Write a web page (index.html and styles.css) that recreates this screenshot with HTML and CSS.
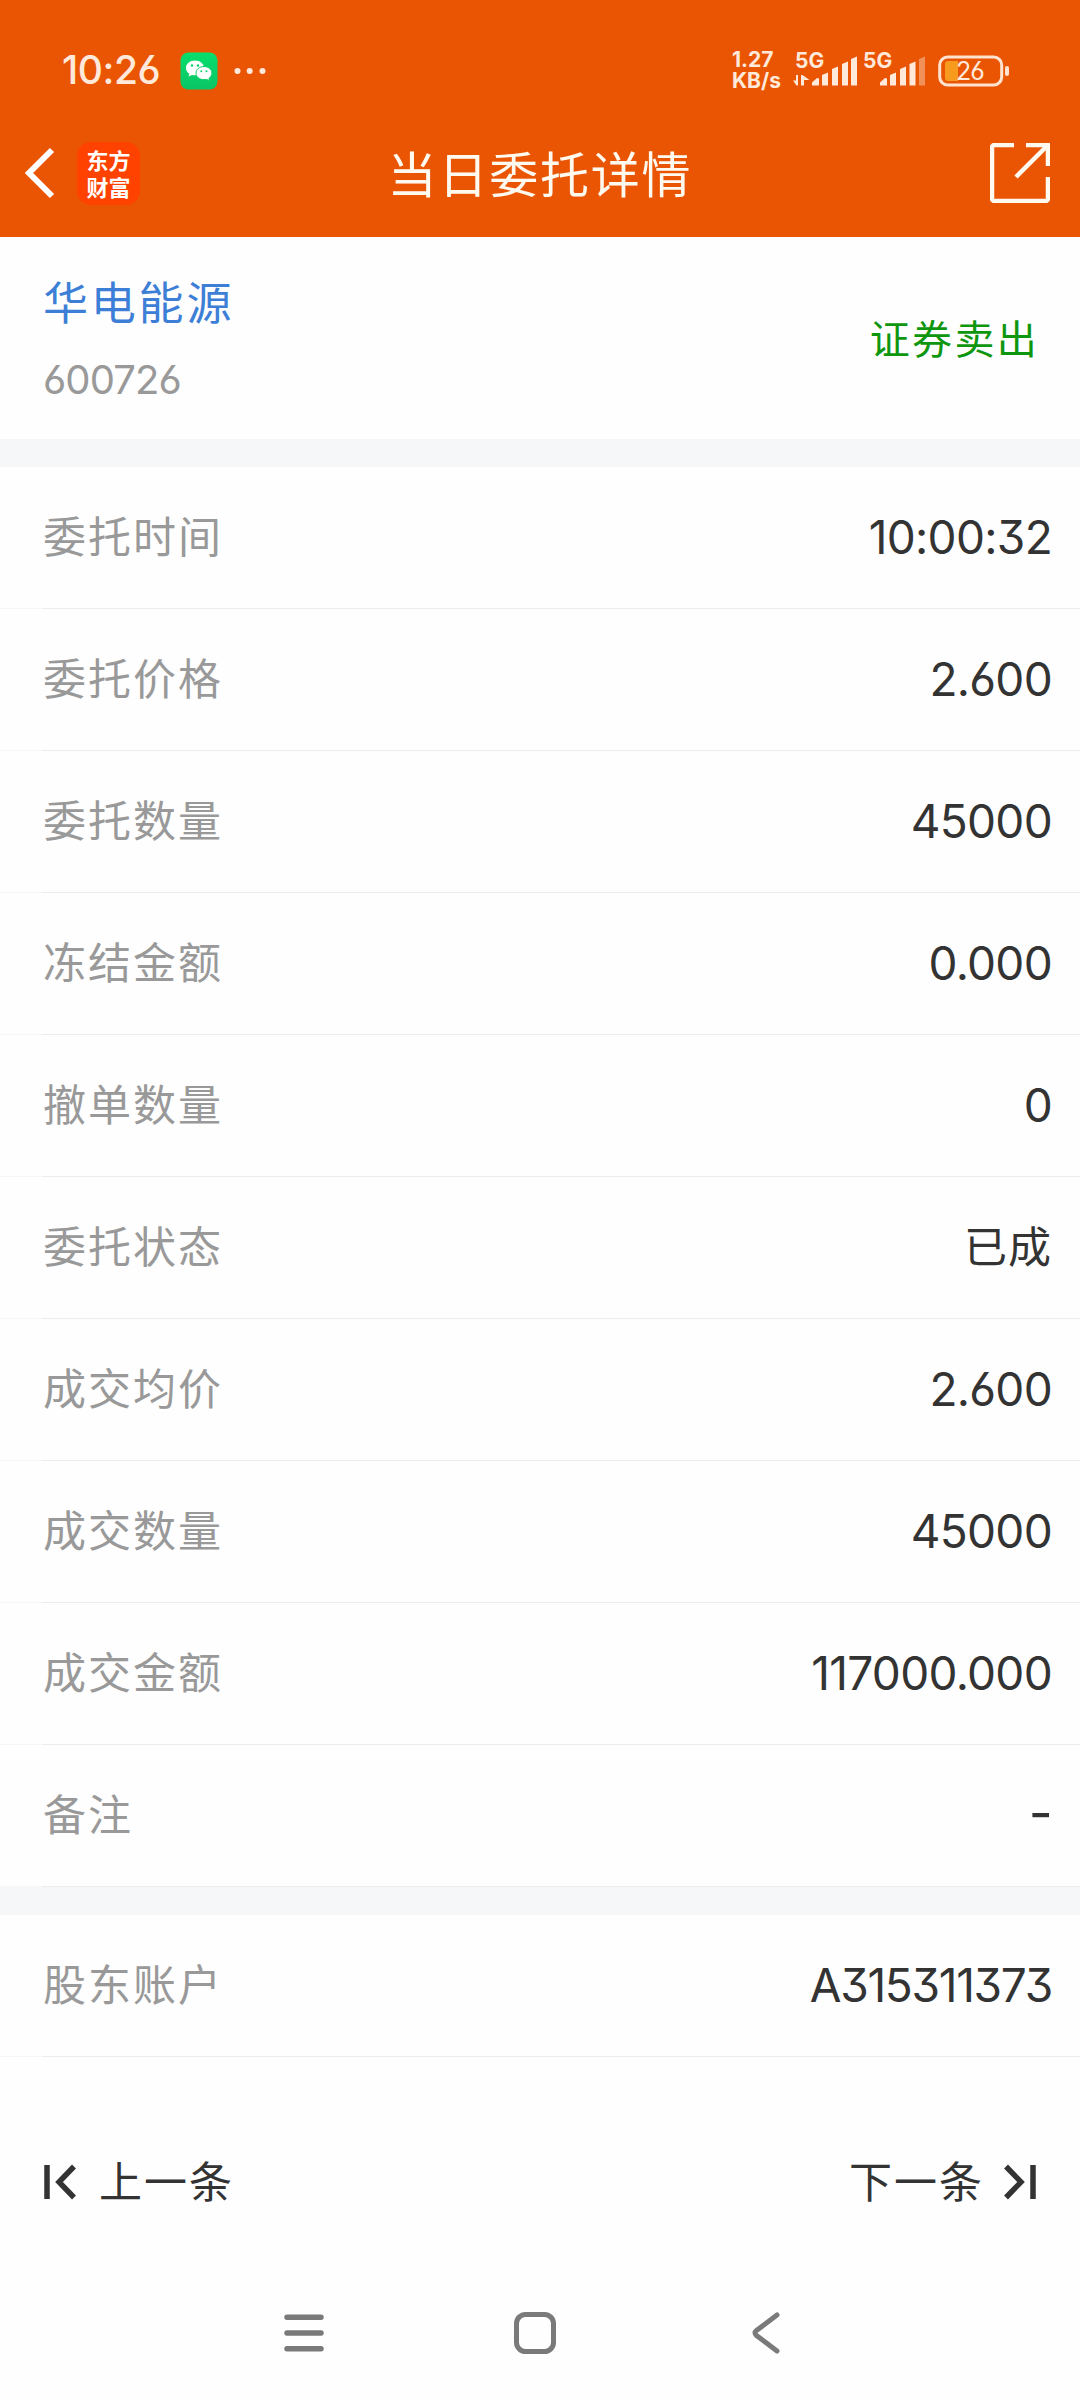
FILE: index.html
```
<!DOCTYPE html>
<html lang="zh-CN">
<head>
    <meta charset="UTF-8">
    <title>当日委托详情</title>
    <link rel="stylesheet" href="styles.css">
</head>
<body>
<div class="head">
    <div class="status">
        <span class="time">10:26</span>
        <svg class="wechat" width="38" height="38" viewBox="0 0 38 38">
            <defs>
                <linearGradient id="wx" x1="0" y1="0" x2="0" y2="1">
                    <stop offset="0" stop-color="#07de6c"/>
                    <stop offset="1" stop-color="#0bc565"/>
                </linearGradient>
            </defs>
            <rect x=".5" y=".5" width="37" height="37" rx="8" fill="url(#wx)"/>
            <path d="M15 8.500c-5.200 0-9 3.400-9 7.500 0 2.500 1.300 4.400 3.300 5.800l-.8 2.800 3.400-1.700c1 .3 2 .4 3.100.4 5.200 0 9-3.100 9-7.300s-3.800-7.500-9-7.500z" fill="#fff"/>
            <path d="M24 14.500c-4.700 0-8 3-8 6.600s3.300 6.600 8 6.600c1 0 1.900-.1 2.700-.3l2.900 1.400-.7-2.400c1.800-1.200 3-3.100 3-5.300 0-3.600-3.300-6.600-7.900-6.600z" fill="#fff" stroke="#0acf68" stroke-width="1"/>
            <g fill="#0acf68">
                <circle cx="12" cy="13.500" r="1.200"/>
                <circle cx="18" cy="13.500" r="1.200"/>
                <circle cx="21.300" cy="19.300" r="1"/>
                <circle cx="26.500" cy="19.300" r="1"/>
            </g>
        </svg>
        <svg class="dots" width="32" height="8" viewBox="0 0 32 8">
            <circle cx="3.500" cy="4" r="3"/>
            <circle cx="15.700" cy="4" r="3"/>
            <circle cx="28.500" cy="4" r="3"/>
        </svg>
        <span class="speed"><b>1.27</b><b>KB/s</b></span>
        <svg class="signal" width="140" height="56" viewBox="0 -8 140 56">
            <text x="4" y="17">5G</text>
            <text x="72" y="17">5G</text>
            <path d="M7 24v10.500h-1.500L2 29.500h3V24zM10 34.500V24h1.500l7 5H13v5.500z"/>
            <path d="M21 34.500v-3l5-4.500 2 .5v7z"/>
            <path d="M31 34.500V24l6-2.500v13z"/>
            <path d="M41 34.500V18l6-2.500v19z"/>
            <path d="M51 34.500V13l6-2.500v24z"/>
            <path d="M60 34.500V8l6-2.500v29z"/>
            <path d="M89 34.500v-3l5-4.500 2 .5v7z"/>
            <path d="M99 34.500V24l6-2.500v13z"/>
            <path d="M109 34.500V18l6-2.500v19z"/>
            <path d="M118.500 34.500V13l6-2.500v24z"/>
            <path d="M128 34.500V8l6-2.500v29z" opacity=".4"/>
        </svg>
        <svg class="battery" width="72" height="32" viewBox="0 0 72 32">
            <rect x="1.700" y="2" width="62" height="28" rx="8" fill="none" stroke="#ffe3cf" stroke-width="3"/>
            <path d="M10 6h10v20H10a3 3 0 0 1-3-3V9a3 3 0 0 1 3-3z" fill="#f79b1e"/>
            <rect x="67" y="11" width="4" height="10" rx="2" fill="#ffe3cf"/>
            <text x="18" y="25">26</text>
        </svg>
    </div>
    <div class="nav">
        <svg class="back" width="32" height="54" viewBox="0 0 32 54">
            <path d="M28 4L5 27l23 23" fill="none" stroke="#fff" stroke-width="6"/>
        </svg>
        <div class="logo"><span>东方</span><span>财富</span></div>
        <h1>当日委托详情</h1>
        <svg class="share" width="60" height="60" viewBox="0 0 60 60">
            <path d="M24 2H4.500a2.500 2.500 0 0 0-2.500 2.500v51A2.500 2.500 0 0 0 4.500 58h51a2.500 2.500 0 0 0 2.500-2.500V34M36 2h22v21M57 3L26 34" fill="none" stroke="#fffaf0" stroke-width="4.500"/>
        </svg>
    </div>
</div>

<div class="stock">
    <div>
        <p class="name">华电能源</p>
        <p class="code">600726</p>
    </div>
    <span class="type">证券卖出</span>
</div>

<ul class="list">
    <li><span>委托时间</span><em>10:00:32</em></li>
    <li><span>委托价格</span><em>2.600</em></li>
    <li><span>委托数量</span><em>45000</em></li>
    <li><span>冻结金额</span><em>0.000</em></li>
    <li><span>撤单数量</span><em>0</em></li>
    <li><span>委托状态</span><em class="cn">已成</em></li>
    <li><span>成交均价</span><em>2.600</em></li>
    <li><span>成交数量</span><em>45000</em></li>
    <li><span>成交金额</span><em>117000.000</em></li>
    <li><span>备注</span><em class="empty">-</em></li>
</ul>

<ul class="list">
    <li><span>股东账户</span><em class="account">A315311373</em></li>
</ul>

<div class="pager">
    <a class="prev">
        <svg width="33" height="36" viewBox="0 0 33 36">
            <path d="M4 1v34M31 2.500L16 18l15 15.500" fill="none" stroke="#333" stroke-width="5.500"/>
        </svg>
        <span>上一条</span>
    </a>
    <a class="next">
        <span>下一条</span>
        <svg width="33" height="36" viewBox="0 0 33 36">
            <path d="M29 1v34M2 2.500L17 18L2 33.500" fill="none" stroke="#333" stroke-width="5.500"/>
        </svg>
    </a>
</div>

<div class="keys">
    <svg width="44" height="44" viewBox="0 0 44 44">
        <path d="M5 6.300h34M5 22h34M5 37.700h34" fill="none" stroke="#7a7a7a" stroke-width="5.500" stroke-linecap="round"/>
    </svg>
    <svg width="44" height="44" viewBox="0 0 44 44">
        <rect x="3.500" y="3.500" width="37" height="37" rx="9" fill="none" stroke="#7a7a7a" stroke-width="5"/>
    </svg>
    <svg width="44" height="44" viewBox="0 0 44 44">
        <path d="M33 4L12.500 19.500q-3 2.500 0 5L33 40" fill="none" stroke="#7a7a7a" stroke-width="5" stroke-linecap="round"/>
    </svg>
</div>
</body>
</html>
```

FILE: styles.css
```
body, div, span, ul, li, em, h1, p {
    margin: 0;
    padding: 0;
}

body {
    width: 1080px;
    height: 2400px;
    overflow: hidden;
    background: #fefefe;
    color: #333;
    font-family: Inter, "Noto Sans CJK SC", sans-serif;
    font-feature-settings: "cv03", "cv04", "cv09";
}

svg {
    display: block;
    flex: none;
}

ul, li {
    list-style: none;
}

em {
    font-style: normal;
}

.head {
    height: 237px;
    background: #ea5504;
}

.status {
    display: flex;
    align-items: center;
    height: 109px;
    padding: 32px 70px 0 62px;
    box-sizing: border-box;
    color: #ffe9da;
    fill: #ffe9da;
}

.time {
    width: 118px;
    padding-bottom: 2px;
    font-size: 39px;
    font-weight: 500;
    line-height: 40px;
    letter-spacing: -.4px;
}

.dots {
    margin-left: 16px;
}

.speed {
    margin-left: auto;
    width: 59px;
    padding-bottom: 2px;
    font-size: 21px;
    line-height: 21px;
}

.speed b {
    display: block;
}

.signal {
    font-size: 21px;
    font-weight: 700;
}

.battery {
    margin-left: 7px;
    font-size: 25px;
    letter-spacing: -1px;
}

.nav {
    display: flex;
    align-items: center;
    height: 128px;
    padding: 0 30px 0 24px;
}

.logo {
    display: flex;
    flex-direction: column;
    align-items: center;
    justify-content: center;
    width: 63px;
    height: 63px;
    margin-left: 21px;
    border-radius: 14px;
    background: #ff4200;
    color: #fff;
    font-family: "Noto Sans CJK SC", sans-serif;
    font-size: 22px;
    font-weight: 700;
    line-height: 27px;
}

.nav h1 {
    flex: 1;
    padding: 0 50px 4px 0;
    text-align: center;
    color: #fffaf0;
    font-size: 49px;
    font-weight: 400;
    letter-spacing: 1.800px;
}

.stock {
    display: flex;
    align-items: center;
    justify-content: space-between;
    height: 202px;
    padding: 0 41px 0 43px;
}

.name {
    color: #3d7fd6;
    font-size: 45px;
    line-height: 66px;
    letter-spacing: 2.800px;
}

.code {
    margin-top: 18px;
    color: #999;
    font-size: 40px;
    line-height: 50px;
    letter-spacing: -.9px;
}

.type {
    padding-bottom: 3px;
    color: #0f960f;
    font-size: 40px;
    letter-spacing: 2.300px;
}

.list {
    border-top: 28px solid #f6f7f9;
}

.list li {
    display: flex;
    align-items: center;
    justify-content: space-between;
    height: 142px;
    padding: 0 28px 0 43px;
    box-sizing: border-box;
    background: linear-gradient(to right, #f7f7f7 42px, #ececec 42px) no-repeat 0 141px;
    background-size: 100% 1px;
}

.list span {
    padding-bottom: 8px;
    color: #999;
    font-size: 43px;
    letter-spacing: 2px;
}

.list em {
    padding-bottom: 2px;
    font-size: 46px;
    letter-spacing: -.7px;
}

.list .cn {
    padding-bottom: 8px;
    font-size: 43px;
    letter-spacing: 1px;
}

.list .account {
    letter-spacing: -1.300px;
}

.list .empty {
    font-size: 52px;
    font-feature-settings: "case";
}

.pager {
    display: flex;
    align-items: center;
    justify-content: space-between;
    height: 250px;
    padding: 0 43px;
    font-size: 43px;
    letter-spacing: 2px;
}

.pager a {
    display: flex;
    align-items: center;
}

.pager span {
    padding-bottom: 7px;
}

.prev span {
    margin-left: 23px;
}

.next span {
    margin-right: 20px;
}

.keys {
    display: flex;
    justify-content: space-between;
    padding: 4px 292px 0 282px;
}
```
